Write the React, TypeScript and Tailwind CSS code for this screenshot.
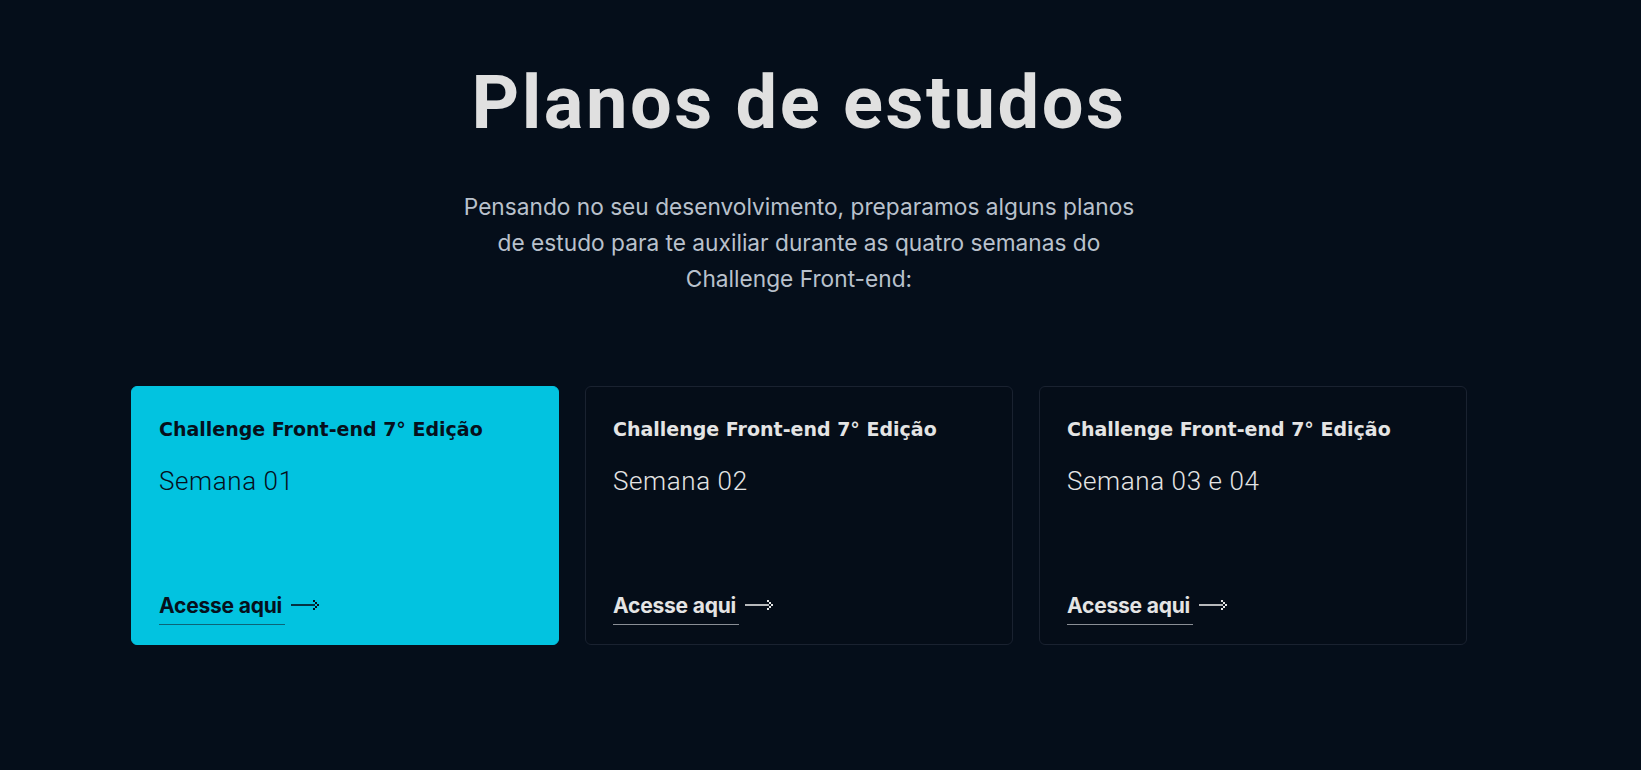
import { ReactNode } from 'react';

const planos = [
    { semana: 'Semana 01', ativo: true },
    { semana: 'Semana 02', ativo: false },
    { semana: 'Semana 03 e 04', ativo: false },
]

function SetaPontilhada({ className }: { className?: string }) {
    return (
        <svg width="30" height="12" viewBox="0 0 30 12" className={className} fill="currentColor">
            <rect x="0" y="5.2" width="24" height="1.6" />
            <rect x="22" y="1" width="2" height="2" />
            <rect x="24" y="3" width="2" height="2" />
            <rect x="26" y="5" width="2" height="2" />
            <rect x="24" y="7" width="2" height="2" />
            <rect x="22" y="9" width="2" height="2" />
        </svg>
    )
}

function CardPlano({ semana, ativo }: { semana: string, ativo: boolean }): ReactNode {
    return (
        <div
            className={
                ativo
                    ? 'flex flex-col h-[259px] rounded-md bg-[#02c3e0] border border-[#02c3e0] pt-[28px] pb-[19px] px-[27px] text-[#06101c]'
                    : 'flex flex-col h-[259px] rounded-md bg-[#050d18] border border-[#1a2230] pt-[28px] pb-[19px] px-[27px] text-[#e4e4e4]'
            }
        >
            <h3 className="text-[19px] leading-7 font-bold font-['DejaVu_Sans',sans-serif]">
                Challenge Front-end 7° Edição
            </h3>
            <p className="mt-[22px] text-[26px] leading-8 font-light font-['Roboto',sans-serif] tracking-[0.6px]">
                {semana}
            </p>
            <a
                href="#"
                className={
                    ativo
                        ? 'mt-auto self-start flex items-center gap-[9px] pb-[3px] border-b border-[#0b6478] text-[21px] font-bold font-["Inter",sans-serif] tracking-[-0.2px]'
                        : 'mt-auto self-start flex items-center gap-[9px] pb-[3px] border-b border-[#8a8e95] text-[21px] font-bold font-["Inter",sans-serif] tracking-[-0.2px]'
                }
            >
                Acesse aqui
                <SetaPontilhada className="mr-[-36px]" />
            </a>
        </div>
    )
}

export default function App() {
    return (
        <div className="min-h-[770px] bg-[#050e1a] pr-[43px]">
            <section className="flex flex-col items-center pt-[53px]">
                <h1 className="text-[74px] leading-[100px] font-bold text-[#e0e0e0] font-['Roboto',sans-serif] tracking-[2.5px]">
                    Planos de estudos
                </h1>
                <p className="mt-[36px] text-center text-[22.7px] leading-[36px] text-[#b9c1cc] font-['Inter',sans-serif]">
                    Pensando no seu desenvolvimento, preparamos alguns planos<br />
                    de estudo para te auxiliar durante as quatro semanas do<br />
                    Challenge Front-end:
                </p>
                <div className="mt-[89px] grid grid-cols-3 gap-[26px] w-[1336px]">
                    {planos.map(p => (
                        <CardPlano key={p.semana} semana={p.semana} ativo={p.ativo} />
                    ))}
                </div>
            </section>
        </div>
    )
}
